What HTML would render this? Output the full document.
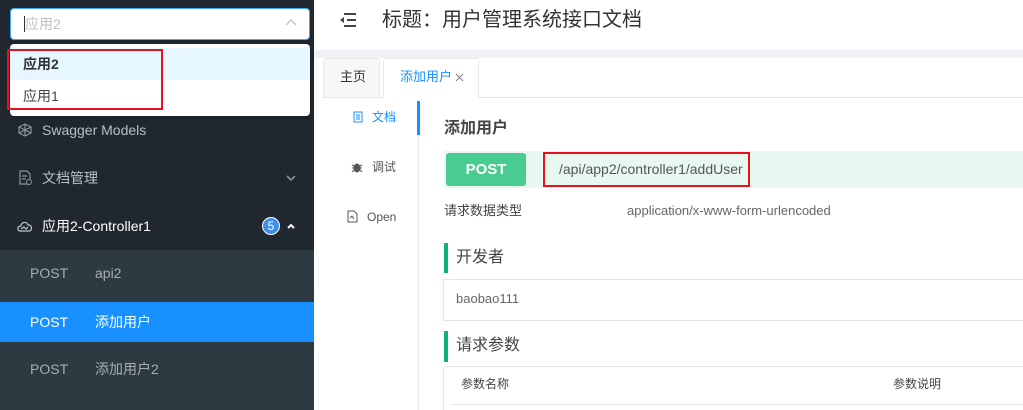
<!DOCTYPE html>
<html><head><meta charset="utf-8"><style>
*{margin:0;padding:0;box-sizing:border-box}
html,body{width:1023px;height:410px;overflow:hidden}
body{position:relative;background:#fff;font-family:"Liberation Sans","Noto Sans CJK SC",sans-serif;font-size:14px;line-height:1.2}
.a{position:absolute}
</style></head><body>
<div class="a" style="left:0;top:0;width:314px;height:410px;background:#20272e"></div>
<div class="a" style="left:0;top:250px;width:314px;height:160px;background:#2d3a42"></div>
<!-- select -->
<div class="a" style="left:10px;top:8px;width:300px;height:32px;background:#fff;border:1px solid #40a9ff;border-radius:4px"></div>
<div class="a" style="left:24px;top:16px;width:1px;height:16px;background:#333"></div>
<div class="a" style="left:25px;top:16px;color:#bfbfbf;font-size:14px">应用2</div>
<svg class="a" style="left:285px;top:18px" width="12" height="10"><path d="M1 7 L6 2 L11 7" fill="none" stroke="#bbb" stroke-width="1.2"/></svg>
<div class="a" style="left:10px;top:44px;width:300px;height:72px;background:#fff;border-radius:4px;box-shadow:0 2px 8px rgba(0,0,0,.15)"></div>
<div class="a" style="left:10px;top:48px;width:300px;height:32px;background:#e6f7ff"></div>
<div class="a" style="left:23px;top:56px;color:#333;font-weight:bold">应用2</div>
<div class="a" style="left:23px;top:88px;color:#444">应用1</div>
<div class="a" style="left:7px;top:49px;width:156px;height:61px;border:2px solid #e5121b"></div>
<!-- menu -->
<svg class="a" style="left:18px;top:123px" width="14" height="14"><path d="M7 1 L13 4 L13 10 L7 13 L1 10 L1 4Z M7 1 L7 13 M1 4 L13 10 M13 4 L1 10" fill="none" stroke="#8a9299" stroke-width="1.2"/></svg>
<div class="a" style="left:42px;top:122px;color:#b8bfc6">Swagger Models</div>
<svg class="a" style="left:18px;top:170px" width="14" height="15"><path d="M2 1 H9 L12 4 V14 H2Z M4 6 H9 M4 9 H8" fill="none" stroke="#8a9299" stroke-width="1.2"/><circle cx="11" cy="12" r="2.5" fill="#20272e" stroke="#8a9299"/></svg>
<div class="a" style="left:42px;top:170px;color:#b8bfc6">文档管理</div>
<svg class="a" style="left:286px;top:174px" width="10" height="8"><path d="M1 2 L5 6 L9 2" fill="none" stroke="#8a9299" stroke-width="1.6"/></svg>
<svg class="a" style="left:17px;top:220px" width="16" height="12"><path d="M3 11 C0 11 0 6 4 6 C4 2 10 1 11 5 C15 4 16 11 12 11Z M4 9 L7 7 L9 9 L11 7" fill="none" stroke="#c0c6cc" stroke-width="1.2"/></svg>
<div class="a" style="left:42px;top:218px;color:#fff">应用2-Controller1</div>
<div class="a" style="left:262px;top:217px;width:18px;height:18px;border-radius:50%;background:#3b8fe8;border:1px solid #fff;color:#fff;font-size:12px;text-align:center;line-height:16px">5</div>
<svg class="a" style="left:286px;top:222px" width="10" height="8"><path d="M2 6 L5 3 L8 6" fill="none" stroke="#fff" stroke-width="2"/></svg>
<div class="a" style="left:30px;top:265px;color:#a6adb4">POST</div><div class="a" style="left:95px;top:265px;color:#a6adb4">api2</div>
<div class="a" style="left:0;top:302px;width:314px;height:40px;background:#1890ff"></div>
<div class="a" style="left:30px;top:314px;color:#fff">POST</div><div class="a" style="left:95px;top:314px;color:#fff">添加用户</div>
<div class="a" style="left:30px;top:361px;color:#a6adb4">POST</div><div class="a" style="left:95px;top:361px;color:#a6adb4">添加用户2</div>
<!-- header -->
<svg class="a" style="left:339px;top:12px" width="18" height="16"><path d="M5 2H17 M8 8H17 M5 14H17" stroke="#444" stroke-width="2"/><path d="M1 8 L5 5 L5 11Z" fill="#444"/></svg>
<div class="a" style="left:382px;top:8px;color:#333;font-size:20px">标题：用户管理系统接口文档</div>
<div class="a" style="left:314px;top:50px;width:709px;height:8px;background:#f0f2f5"></div>
<!-- tabs -->
<div class="a" style="left:323px;top:58px;width:57px;height:40px;background:#f7f7f7;border:1px solid #e8e8e8;border-bottom:none;border-radius:3px 3px 0 0"></div>
<div class="a" style="left:340px;top:69px;color:#333;font-size:13px">主页</div>
<div class="a" style="left:383px;top:58px;width:96px;height:40px;background:#fff;border:1px solid #e8e8e8;border-bottom:none;border-radius:3px 3px 0 0"></div>
<div class="a" style="left:400px;top:69px;color:#1890ff;font-size:13px">添加用户</div>
<svg class="a" style="left:455px;top:73px" width="9" height="9"><path d="M1 1L8 8M8 1L1 8" stroke="#888" stroke-width="1.1"/></svg>
<div class="a" style="left:323px;top:97px;width:60px;height:1px;background:#e8e8e8"></div>
<div class="a" style="left:479px;top:97px;width:544px;height:1px;background:#e8e8e8"></div>
<!-- vertical tabs -->
<div class="a" style="left:418px;top:101px;width:1px;height:309px;background:#e8e8e8"></div>
<div class="a" style="left:417px;top:101px;width:3px;height:34px;background:#1890ff"></div>
<svg class="a" style="left:353px;top:111px" width="10" height="12"><path d="M1 1H9V11H1Z M3 4H7 M3 6H7 M3 8H7" fill="none" stroke="#1890ff"/></svg>
<div class="a" style="left:372px;top:110px;color:#1890ff;font-size:12px">文档</div>
<svg class="a" style="left:351px;top:161px" width="12" height="12"><ellipse cx="6" cy="7" rx="3.5" ry="4.5" fill="#555"/><path d="M1 4L3 5 M11 4L9 5 M1 7H3 M11 7H9 M1 11L3 9 M11 11L9 9" stroke="#555"/></svg>
<div class="a" style="left:372px;top:160px;color:#555;font-size:12px">调试</div>
<svg class="a" style="left:347px;top:210px" width="11" height="13"><path d="M1 1H7L10 4V12H1Z M3 8L5 6L7 9" fill="none" stroke="#555"/></svg>
<div class="a" style="left:367px;top:210px;color:#555;font-size:12px">Open</div>
<!-- content -->
<div class="a" style="left:444px;top:119px;color:#444;font-size:16px;font-weight:bold">添加用户</div>
<div class="a" style="left:444px;top:151px;width:579px;height:37px;background:#e8f7f0"></div>
<div class="a" style="left:446px;top:153px;width:80px;height:33px;background:#49cc90;border-radius:3px;color:#fff;font-weight:bold;font-size:15px;text-align:center;line-height:33px">POST</div>
<div class="a" style="left:559px;top:161px;color:#555">/api/app2/controller1/addUser</div>
<div class="a" style="left:543px;top:152px;width:207px;height:35px;border:2px solid #e5121b"></div>
<div class="a" style="left:444px;top:203px;color:#444;font-size:13px">请求数据类型</div>
<div class="a" style="left:627px;top:203px;color:#666;font-size:13px">application/x-www-form-urlencoded</div>
<div class="a" style="left:444px;top:243px;width:4px;height:30px;background:#0bb07a"></div>
<div class="a" style="left:456px;top:248px;color:#444;font-size:16px">开发者</div>
<div class="a" style="left:443px;top:279px;width:590px;height:42px;border:1px solid #e5e5e5"></div>
<div class="a" style="left:456px;top:291px;color:#666;font-size:13px">baobao111</div>
<div class="a" style="left:444px;top:331px;width:4px;height:31px;background:#0bb07a"></div>
<div class="a" style="left:456px;top:336px;color:#444;font-size:16px">请求参数</div>
<div class="a" style="left:443px;top:366px;width:590px;height:60px;border:1px solid #e8e8e8;border-radius:3px"></div>
<div class="a" style="left:461px;top:377px;color:#444;font-size:12px">参数名称</div>
<div class="a" style="left:893px;top:377px;color:#444;font-size:12px">参数说明</div>
<div class="a" style="left:450px;top:404px;width:573px;height:1px;background:#e8e8e8"></div>
</body></html>
